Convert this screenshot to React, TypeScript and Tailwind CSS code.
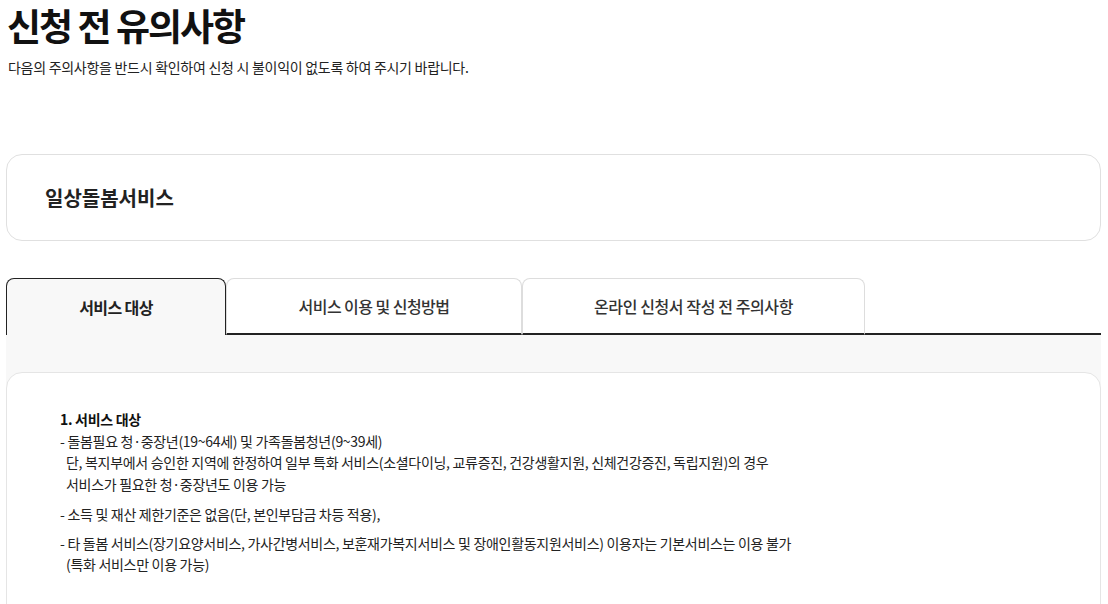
import React from "react";

export default function App() {
  return (
    <div className="w-[1108px] h-[604px] overflow-hidden bg-white pl-[6px] pr-[7px] font-['Noto_Sans_CJK_KR',sans-serif] text-[#222]">
      <h1 className="text-[37px] leading-[50px] font-bold tracking-[-2px] text-[#111] pl-[1px]">신청 전 유의사항</h1>
      <p className="mt-[7px] text-[14px] leading-[20px] tracking-[-0.28px] text-[#222] pl-[2px]">
        다음의 주의사항을 반드시 확인하여 신청 시 불이익이 없도록 하여 주시기 바랍니다.
      </p>

      <div className="mt-[77px] h-[87px] rounded-[16px] border border-[#e0e0e0] flex items-center pl-[38px]">
        <h2 className="text-[20px] font-bold tracking-[0px] text-[#222]">일상돌봄서비스</h2>
      </div>

      <div className="mt-[37px] flex h-[57px]">
        <div className="w-[220px] h-full rounded-t-[8px] border border-b-0 border-[#222] bg-[#f8f8f8] flex items-center justify-center">
          <span className="text-[16px] font-bold tracking-[-0.6px] text-[#222]">서비스 대상</span>
        </div>
        <div className="w-[296px] h-full rounded-t-[8px] border-t border-l border-r border-t-[#dddddd] border-l-[#dddddd] border-r-[#dddddd] border-b-2 border-b-[#222] bg-white flex items-center justify-center">
          <span className="text-[16px] font-medium tracking-[-0.55px] text-[#333]">서비스 이용 및 신청방법</span>
        </div>
        <div className="w-[343px] h-full rounded-t-[8px] border-t border-l border-r border-t-[#dddddd] border-l-[#dddddd] border-r-[#dddddd] border-b-2 border-b-[#222] bg-white flex items-center justify-center">
          <span className="text-[16px] font-medium tracking-[-0.4px] text-[#333]">온라인 신청서 작성 전 주의사항</span>
        </div>
        <div className="flex-1 h-full border-b-2 border-[#222]" />
      </div>

      <div className="bg-[#f8f8f8] pt-[37px] h-[400px]">
        <div className="bg-white rounded-[16px] border border-[#e5e5e5] pt-[36px] pl-[53px] h-[400px] text-[14px] leading-[21.5px] tracking-[-0.3px] text-[#222]">
          <p className="font-bold text-[#111]">1. 서비스 대상</p>
          <p>- 돌봄필요 청·중장년(19~64세) 및 가족돌봄청년(9~39세)</p>
          <p className="pl-[6px]">
            단, 복지부에서 승인한 지역에 한정하여 일부 특화 서비스(소셜다이닝, 교류증진, 건강생활지원, 신체건강증진, 독립지원)의 경우
          </p>
          <p className="pl-[6px]">서비스가 필요한 청·중장년도 이용 가능</p>
          <p className="mt-[8.5px]">- 소득 및 재산 제한기준은 없음(단, 본인부담금 차등 적용),</p>
          <p className="mt-[7.5px]">
            - 타 돌봄 서비스(장기요양서비스, 가사간병서비스, 보훈재가복지서비스 및 장애인활동지원서비스) 이용자는 기본서비스는 이용 불가
          </p>
          <p className="pl-[6px]">(특화 서비스만 이용 가능)</p>
        </div>
      </div>
    </div>
  );
}
